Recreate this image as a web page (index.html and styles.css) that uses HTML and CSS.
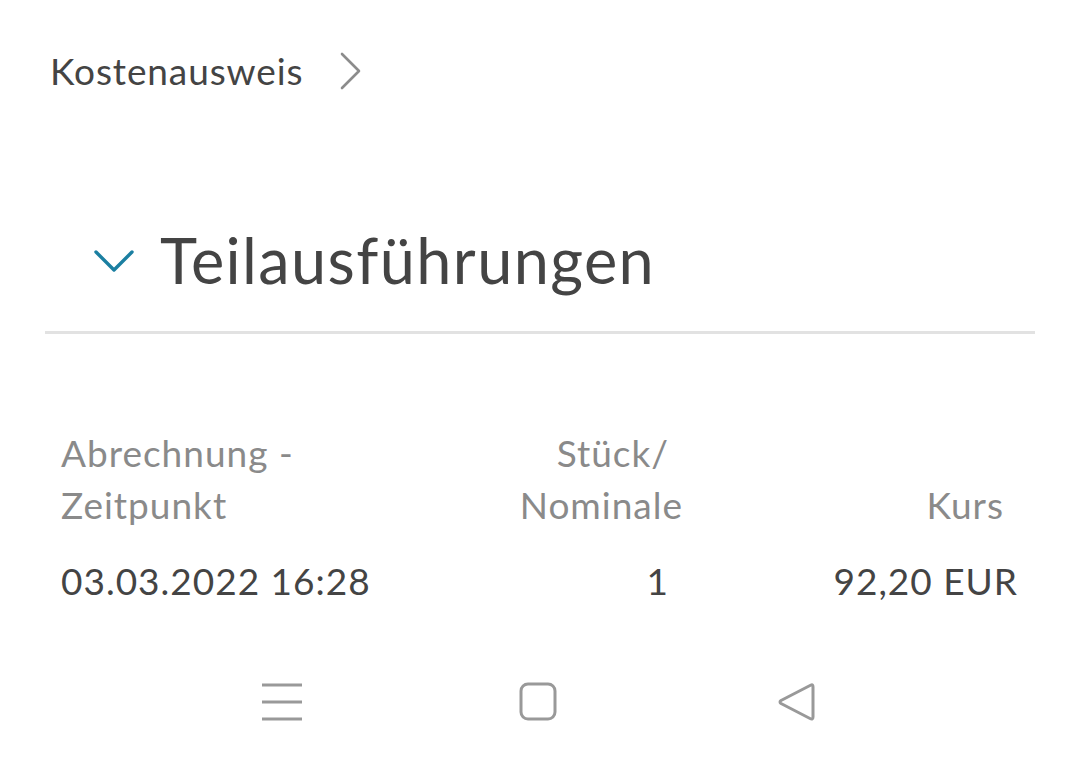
FILE: index.html
```html
<!DOCTYPE html>
<html lang="de">
<head>
<meta charset="utf-8">
<link rel="stylesheet" href="styles.css">
</head>
<body>
<div class="page">
  <div class="crumb">
    <span class="crumb-text">Kostenausweis</span>
    <svg class="crumb-chev" width="26" height="40" viewBox="0 0 26 40"><path d="M4 3 L21 20 L4 37" fill="none" stroke="#8c8c8c" stroke-width="2.6" stroke-linecap="round" stroke-linejoin="round"/></svg>
  </div>

  <div class="section-head">
    <svg class="sec-chev" width="40" height="22" viewBox="0 0 40 22"><path d="M2 2 L20 20 L38 2" fill="none" stroke="#1b7fa1" stroke-width="3.4" stroke-linecap="round" stroke-linejoin="round"/></svg>
    <h2 class="sec-title">Teilausführungen</h2>
  </div>
  <div class="divider"></div>

  <div class="table">
    <div class="row head">
      <div class="c1">Abrechnung -<br>Zeitpunkt</div>
      <div class="c2"><span class="inset">Stück/</span><br>Nominale</div>
      <div class="c3"><br><span class="inset2">Kurs</span></div>
    </div>
    <div class="row data">
      <div class="c1">03.03.2022 16:28</div>
      <div class="c2"><span class="inset">1</span></div>
      <div class="c3">92,20 EUR</div>
    </div>
  </div>

  <div class="navbar">
    <svg width="44" height="40" viewBox="0 0 44 40"><g stroke="#999" stroke-width="3"><line x1="2" y1="3" x2="42" y2="3"/><line x1="2" y1="20" x2="42" y2="20"/><line x1="2" y1="37" x2="42" y2="37"/></g></svg>
    <svg width="40" height="40" viewBox="0 0 40 40"><rect x="2" y="2" width="34" height="35" rx="7" fill="none" stroke="#999" stroke-width="3"/></svg>
    <svg width="40" height="40" viewBox="0 0 40 40"><path d="M34 3 Q36 2 36 5 L36 35 Q36 38 33 36.5 L4 21.5 Q2 20 4 18.5 Z" fill="none" stroke="#999" stroke-width="3" stroke-linejoin="round"/></svg>
  </div>
</div>
</body>
</html>
```

FILE: styles.css
```css
html, body {
  margin: 0;
  padding: 0;
  background: #ffffff;
}
.page {
  width: 1080px;
  height: 769px;
  font-family: Lato, "Open Sans", sans-serif;
  color: #444444;
  overflow: hidden;
}
.crumb {
  display: flex;
  align-items: center;
  padding: 47px 0 0 50px;
  height: 48px;
}
.crumb-text {
  font-size: 37px;
  letter-spacing: 0.9px;
  line-height: 48px;
  color: #444;
}
.crumb-chev {
  margin-left: 35px;
}
.section-head {
  display: flex;
  align-items: center;
  margin-top: 125px;
  padding-left: 94px;
  height: 80px;
}
.sec-chev {
  margin-right: 26px;
  margin-top: 2px;
}
.sec-title {
  margin: 0;
  font-weight: 400;
  font-size: 63px;
  letter-spacing: 1.4px;
  line-height: 80px;
  color: #444;
}
.divider {
  margin: 31px 45px 0 45px;
  height: 3px;
  background: #e2e2e2;
}
.table {
  margin-top: 93px;
  padding-left: 61px;
}
.row {
  display: grid;
  grid-template-columns: 440px 182px 335px;
  font-size: 37px;
  letter-spacing: 1px;
  line-height: 48px;
}
.head {
  color: #8a8a8a;
  line-height: 52px;
}
.data {
  margin-top: 26px;
  color: #444;
}
.c2, .c3 {
  text-align: right;
}
.inset {
  margin-right: 14px;
}
.inset2 {
  margin-right: 14px;
}
.navbar {
  margin-top: 77px;
  display: flex;
  padding-left: 260px;
}
.navbar svg:nth-child(2) {
  margin-left: 215px;
}
.navbar svg:nth-child(3) {
  margin-left: 218px;
}
```
